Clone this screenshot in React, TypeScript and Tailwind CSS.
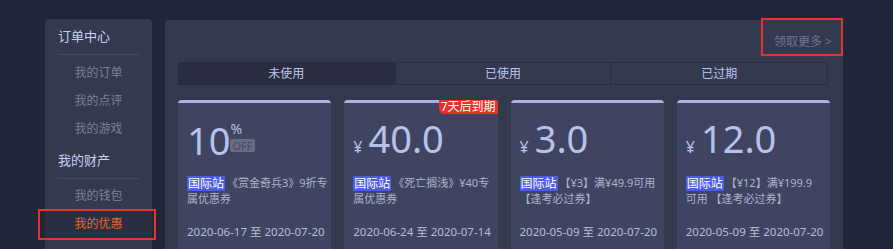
import React from 'react'

const font = { fontFamily: '"Noto Sans", "Noto Sans CJK SC", sans-serif' }

interface Coupon {
  value: string
  kind: 'off' | 'cash'
  line1: string
  line2: string
  from: string
  to: string
  badge?: string
}

const coupons: Coupon[] = [
  { value: '10', kind: 'off', line1: '《赏金奇兵3》9折专', line2: '属优惠券', from: '2020-06-17', to: '2020-07-20' },
  { value: '40.0', kind: 'cash', line1: '《死亡搁浅》¥40专', line2: '属优惠券', from: '2020-06-24', to: '2020-07-14', badge: '7天后到期' },
  { value: '3.0', kind: 'cash', line1: '【¥3】满¥49.9可用', line2: '【逢考必过券】', from: '2020-05-09', to: '2020-07-20' },
  { value: '12.0', kind: 'cash', line1: '【¥12】满¥199.9', line2: '可用 【逢考必过券】', from: '2020-05-09', to: '2020-07-20' },
]

function SideItem({ label, active }: { label: string; active?: boolean }) {
  if (active) {
    return (
      <div className="relative h-[28px] flex items-center justify-center bg-[#2a2e41] text-[12px] text-[#f0661f]">
        {label}
        <div className="absolute -left-[7px] -right-[4px] -top-[1px] -bottom-[2px] border-2 border-[#e8322c]" />
      </div>
    )
  }
  return <div className="h-[28px] flex items-center justify-center text-[12px] text-[#7a8098]">{label}</div>
}

function CouponCard({ c }: { c: Coupon }) {
  return (
    <div className="relative h-[160px] bg-[#3f4560] rounded-t-[4px] overflow-hidden">
      <div className="h-[3px] bg-[#aeb1e6]" />
      {c.badge && (
        <div className="absolute right-0 top-0 h-[14px] px-[2px] bg-[#e6302a] text-white text-[12px] leading-[14px] rounded-bl-[5px]">
          {c.badge}
        </div>
      )}
      <div className="pl-[9px] pr-[4px]">
        <div className="h-[56px] flex items-end text-[#b9c1ea]">
          {c.kind === 'off' ? (
            <div className="flex items-start">
              <span className="text-[38px] leading-[38px]">{c.value}</span>
              <div className="flex flex-col items-start pt-[1px]">
                <span className="text-[14px] leading-[14px]">%</span>
                <span className="mt-[3px] px-[2px] h-[13px] leading-[13px] rounded-[2px] bg-[#676c84] text-[#454a63] text-[11px]">OFF</span>
              </div>
            </div>
          ) : (
            <div className="flex items-baseline">
              <span className="text-[16px] mr-[6px]">¥</span>
              <span className="text-[38px] leading-[38px]">{c.value}</span>
            </div>
          )}
        </div>
        <div className="mt-[16px] h-[34px] text-[11px] leading-[16px] text-[#aeb4cb] whitespace-nowrap">
          <div className="flex items-center gap-[2px]">
            <span className="bg-[#4b5de3] text-white text-[12px] leading-[15px] px-[1px]">国际站</span>
            <span>{c.line1}</span>
          </div>
          <div>{c.line2}</div>
        </div>
        <div className="mt-[14px] whitespace-nowrap text-[11.5px] text-[#b7bed6]">
          {c.from} 至 {c.to}
        </div>
      </div>
    </div>
  )
}

export default function App() {
  return (
    <div style={font} className="w-[893px] h-[249px] overflow-hidden bg-[#21253a] flex items-start pt-[19px] pl-[45px]">
      <div className="w-[107px] h-[260px] bg-[#343a4e] rounded-t-[4px]">
        <div className="mx-[13px] h-[36px] flex items-center border-b border-[#454b61] text-[13px] text-[#c7cff3]">订单中心</div>
        <div className="mt-[4px]">
          <SideItem label="我的订单" />
          <SideItem label="我的点评" />
          <SideItem label="我的游戏" />
        </div>
        <div className="mx-[13px] h-[36px] flex items-center border-b border-[#454b61] text-[13px] text-[#c7cff3]">我的财产</div>
        <div className="mt-[3px]">
          <SideItem label="我的钱包" />
          <SideItem label="我的优惠" active />
          <div className="mt-[4px]">
            <SideItem label="我的积分" />
          </div>
        </div>
      </div>

      <div className="ml-[13px] mt-[1px] w-[678px] h-[260px] bg-[#343a4e] rounded-t-[4px]">
        <div className="h-[42px] flex justify-end">
          <div className="relative -mt-[2px] w-[82px] h-[38px] flex items-center justify-center pt-[9px] pl-[2px] text-[12px] text-[#6e7591]">
            领取更多 &gt;
            <div className="absolute inset-0 border-2 border-[#e8322c]" />
          </div>
        </div>
        <div className="px-[13px]">
          <div className="w-[650px] h-[23px] grid grid-cols-3 text-[12px] text-[#bcc5ef]">
            <div className="flex items-center justify-center bg-[#292d3f]">未使用</div>
            <div className="flex items-center justify-center border border-[#2a2e41]">已使用</div>
            <div className="flex items-center justify-center border border-[#2a2e41] border-l-0">已过期</div>
          </div>
          <div className="mt-[15px] grid grid-cols-4 gap-[13px]">
            {coupons.map((c) => (
              <CouponCard key={c.from + c.value} c={c} />
            ))}
          </div>
        </div>
      </div>
    </div>
  )
}
